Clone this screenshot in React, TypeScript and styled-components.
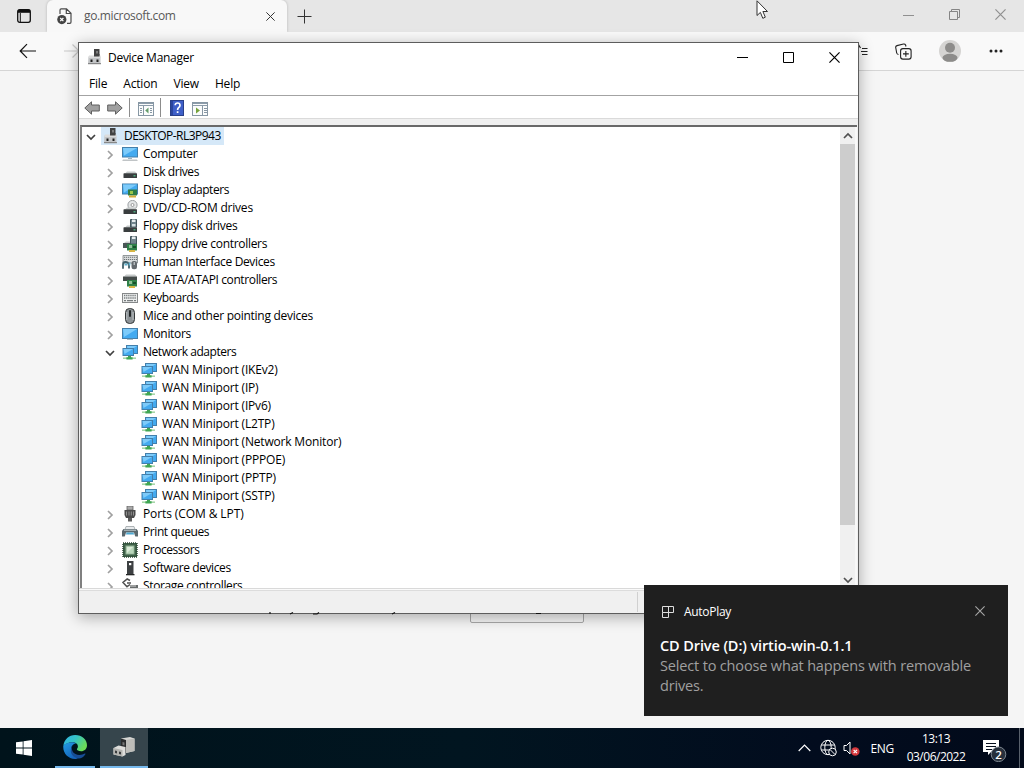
import React from 'react';
import styled, { createGlobalStyle } from 'styled-components';

const GlobalStyle = createGlobalStyle`
  * { box-sizing: border-box; }
  body {
    margin: 0;
    overflow: hidden;
    font-family: 'Open Sans', 'Noto Sans', sans-serif;
    font-size: 12px;
    color: #000;
  }
  svg { display: block; flex: none; }
`;

const Desktop = styled.div`
  position: relative;
  width: 1024px;
  height: 768px;
  display: flex;
  flex-direction: column;
  overflow: hidden;
`;

/* ---------- browser ---------- */

const Browser = styled.div`
  flex: 1;
  display: flex;
  flex-direction: column;
  background: #f5f5f5;
`;

const TabStrip = styled.div`
  height: 32px;
  display: flex;
  align-items: stretch;
  background: #e6e6e6;
`;

const TabActions = styled.div`
  width: 47px;
  display: flex;
  align-items: center;
  padding-left: 17px;
`;

const Tab = styled.div`
  width: 240px;
  display: flex;
  align-items: center;
  padding: 0 12px 0 9px;
  background: #f8f8f8;
  border-radius: 6px 6px 0 0;
  box-shadow: 0 0 3px rgba(0, 0, 0, 0.22);
`;

const TabTitle = styled.span`
  flex: 1;
  margin-left: 11px;
  padding-bottom: 1px;
  color: #585858;
  letter-spacing: -0.36px;
  white-space: nowrap;
`;

const NewTab = styled.div`
  display: flex;
  align-items: center;
  padding-left: 10px;
`;

const BrowserControls = styled.div`
  margin-left: auto;
  display: flex;
  align-items: center;
  gap: 35px;
  padding: 0 18px 4px 0;
`;

const AddressBar = styled.div`
  position: relative;
  z-index: 1;
  height: 39px;
  display: flex;
  align-items: center;
  padding: 0 21px 0 19px;
  background: #f9f9f9;
  border-bottom: 1px solid #d5d5d5;
`;

const NavIcons = styled.div`
  display: flex;
  gap: 26px;
`;

const ToolIcons = styled.div`
  margin-left: auto;
  display: flex;
  align-items: center;
  gap: 27px;
`;

const Page = styled.div`
  flex: 1;
  padding: 519px 0 0 470px;
`;

const PageButton = styled.div`
  width: 114px;
  height: 33px;
  border: 1px solid #a8a8a8;
  border-radius: 2px;
`;

const Pointer = styled.svg`
  position: absolute;
  z-index: 5;
  left: 756px;
  top: 0;
`;

/* ---------- device manager ---------- */

const Window = styled.div`
  position: absolute;
  z-index: 2;
  left: 78px;
  top: 42px;
  width: 781px;
  height: 572px;
  display: flex;
  flex-direction: column;
  background: #f0f0f0;
  border: 1px solid #5d5d5d;
  box-shadow: 0 3px 14px rgba(0, 0, 0, 0.32);
`;

const TitleBar = styled.div`
  height: 30px;
  display: flex;
  align-items: center;
  padding: 0 18px 2px 8px;
  background: #fff;
`;

const WindowTitle = styled.span`
  flex: 1;
  margin-left: 5px;
  letter-spacing: -0.28px;
`;

const WindowControls = styled.div`
  display: flex;
  gap: 35px;
`;

const MenuBar = styled.div`
  height: 23px;
  display: flex;
  align-items: center;
  gap: 16px;
  padding: 0 0 2px 10px;
  background: #fff;
  border-bottom: 1px solid #a3a3a3;
`;

const MenuItem = styled.span`
  letter-spacing: -0.18px;
`;

const Toolbar = styled.div`
  height: 23px;
  display: flex;
  align-items: center;
  padding: 1px 0 0 5px;
  background: #fff;
  border-bottom: 1px solid #dadada;
`;

const Separator = styled.div<{ $after?: number }>`
  width: 1px;
  height: 19px;
  margin: 0 ${p => p.$after ?? 8}px 0 6px;
  background: #8c8c8c;
`;

const ToolButton = styled.div<{ $gap?: number; $drop?: number }>`
  margin-right: ${p => p.$gap ?? 0}px;
  padding-top: ${p => p.$drop ?? 0}px;
`;

const TreePane = styled.div`
  height: 463px;
  margin: 6px 1px 0 1px;
  display: flex;
  background: #fff;
  border-top: 2px solid #696969;
  border-left: 2px solid #808080;
  overflow: hidden;
`;

const TreeList = styled.div`
  flex: 1;
  overflow: hidden;
`;

const Row = styled.div<{ $level: number }>`
  height: 18px;
  display: flex;
  align-items: flex-start;
  padding-left: ${p => p.$level * 19}px;
`;

const ChevronCell = styled.div`
  width: 19px;
  height: 18px;
  display: flex;
  align-items: center;
  justify-content: center;
  padding: 2px 1px 0 0;
`;

const Entry = styled.div<{ $selected?: boolean }>`
  height: 18px;
  display: flex;
  padding: 1px 3px 0 2px;
  background: ${p => (p.$selected ? '#d5e8f8' : 'transparent')};
`;

const EntryText = styled.span<{ $spacing: number }>`
  margin-left: 5px;
  line-height: 15px;
  white-space: nowrap;
  letter-spacing: ${p => p.$spacing}px;
`;

const ScrollBar = styled.div`
  width: 17px;
  display: flex;
  flex-direction: column;
  align-items: center;
  background: #f0f0f0;
  border-right: 2px solid #f8f8f8;
`;

const ScrollArrow = styled.div`
  height: 17px;
  display: flex;
  align-items: center;
`;

const ScrollThumb = styled.div`
  width: 15px;
  height: 381px;
  margin-bottom: auto;
  background: #cdcdcd;
`;

const StatusBar = styled.div`
  flex: 1;
  display: flex;
  border-top: 1px solid #d9d9d9;
  box-shadow: inset 0 1px #fafafa, inset 0 2px #dcdcdc;
`;

const StatusCell = styled.div`
  width: 559px;
  margin: 3px 0 1px;
  border-right: 1px solid #d0d0d0;
`;

const Descenders = styled.svg`
  position: absolute;
  z-index: 3;
  left: 260px;
  top: 611px;
`;

/* ---------- notification ---------- */

const Toast = styled.div`
  position: absolute;
  z-index: 4;
  left: 644px;
  top: 585px;
  width: 364px;
  height: 131px;
  padding: 17px 23px 0 16px;
  background: #1f1f1f;
  color: #fff;
`;

const ToastHeader = styled.div`
  height: 19px;
  display: flex;
  align-items: center;
  padding-left: 1px;
`;

const ToastApp = styled.span`
  flex: 1;
  margin-left: 10px;
  letter-spacing: -0.3px;
`;

const ToastClose = styled.div`
  padding-bottom: 2px;
`;

const ToastTitle = styled.div`
  margin-top: 15px;
  font-size: 14.5px;
  font-weight: 600;
  line-height: 20px;
  letter-spacing: -0.11px;
`;

const ToastBody = styled.div`
  font-size: 14.5px;
  line-height: 20px;
  letter-spacing: -0.16px;
  color: #a0a0a0;
`;

/* ---------- taskbar ---------- */

const Taskbar = styled.div`
  height: 40px;
  display: flex;
  background: linear-gradient(90deg, #00131b, #011520 45%, #020c1e 80%, #020a1a);
  color: #fff;
`;

const TaskButton = styled.div<{ $active?: boolean; $width?: number }>`
  width: ${p => p.$width ?? 48}px;
  display: flex;
  align-items: center;
  justify-content: center;
  background: ${p => (p.$active ? '#36454c' : 'transparent')};
`;

const RunningButton = styled(TaskButton)`
  border-bottom: 2px solid #76b9ed;
`;

const Tray = styled.div`
  margin-left: auto;
  display: flex;
  align-items: center;
`;

const TrayIcons = styled.div`
  display: flex;
  align-items: center;
  gap: 9px;
`;

const Language = styled.span`
  margin-left: 10px;
  letter-spacing: -0.3px;
`;

const Clock = styled.div`
  width: 60px;
  margin: 0 17px 0 12px;
  text-align: center;
  line-height: 18px;
  letter-spacing: -0.5px;
  padding-bottom: 1px;
  white-space: nowrap;
`;

const ShowDesktop = styled.div`
  width: 5px;
  height: 40px;
  margin-left: 12px;
  border-left: 1px solid #59616c;
`;

/* ---------- drawings ---------- */

const Chevron = ({ dir, color = '#a0a0a0' }: { dir: 'right' | 'down' | 'up'; color?: string }) => {
  const paths = {
    right: 'M3 1 L7 5 L3 9',
    down: 'M1 3 L5 7 L9 3',
    up: 'M1 7 L5 3 L9 7',
  };
  return (
    <svg width="10" height="10" fill="none" stroke={color} strokeWidth="1.7">
      <path d={paths[dir]} />
    </svg>
  );
};

const Cross = ({ size = 10, color = '#000', width = 1.1 }: { size?: number; color?: string; width?: number }) => (
  <svg width={size} height={size} viewBox="0 0 10 10" stroke={color} strokeWidth={width}>
    <path d="M.4 .4 L9.6 9.6 M9.6 .4 L.4 9.6" />
  </svg>
);

const Drive = () => (
  <>
    <path d="M3 9.5 L5 7.5 H13 L15 9.5Z" fill="#c5c9c9" />
    <rect x="1.5" y="9.3" width="13.5" height="4.8" rx=".6" fill="#393d3e" />
    <rect x="11.5" y="11.2" width="2" height="1.2" fill="#52c38c" />
  </>
);

const Card = () => (
  <>
    <path d="M5 8h10v6.5H5z" fill="#2f8048" />
    <path d="M7 9h3v3H7z" fill="#8fc197" />
    <path d="M11 10h3v2h-3z" fill="#174f2b" />
    <path d="M7 14h6v2H7z" fill="#d6b646" />
  </>
);

const Screen = ({ x = 0, y = 2, w = 16, h = 11 }) => (
  <>
    <rect x={x + 0.5} y={y + 0.5} width={w - 1} height={h - 1} fill="#43aaf0" stroke="#437fab" />
    <path d={`M${x + 1} ${y + 1}h${w - 2}l-${w - 3} ${h - 3}z`} fill="#7dcbfa" />
  </>
);

const iconShapes: Record<string, React.ReactNode> = {
  root: (
    <>
      <rect x="7" y="0" width="5.5" height="8" fill="#424242" />
      <rect x="9" y="2" width="2" height="2.5" fill="#7d7d7d" />
      <path d="M1.500 7.500h12V15H1z" fill="#c3c5c7" />
      <path d="M2 6.500h11.500V9H1.500z" fill="#dcdcdc" />
      <path d="M7 5h5.500v2.500H7z" fill="#424242" />
      <path d="M1 14.200h13v1H1z" fill="#777" />
      <path d="M3.500 10.500h2V13h-2zM9.500 10.500h2V13h-2z" fill="#202020" />
    </>
  ),
  computer: (
    <>
      <Screen y={1} h={10.5} />
      <path d="M6 12h4v1H6z" fill="#9ab2c0" />
      <path d="M1 13.5h14l.8 1.5H.2z" fill="#c0c4c6" />
    </>
  ),
  disk: <Drive />,
  display: (
    <>
      <Screen y={1.5} h={11} />
      <path d="M6 7.5h9v6H6z" fill="#2e7d46" />
      <path d="M8 9h3v3H8z" fill="#9bc64c" />
      <path d="M7 13.5h7v2H7z" fill="#d5ac3a" />
    </>
  ),
  dvd: (
    <>
      <circle cx="10.5" cy="5" r="4.6" fill="#e3e5e6" stroke="#929698" strokeWidth=".9" />
      <circle cx="10.5" cy="5" r="1.5" fill="#fff" stroke="#888" strokeWidth=".8" />
      <Drive />
    </>
  ),
  floppy: (
    <>
      <Drive />
      <path d="M8.5 1.5h6v7.5h-6z" fill="#71858d" stroke="#42545c" />
      <path d="M10 1.5h3.5V4H10z" fill="#e6ecee" />
      <path d="M10 6h3.5v2.5H10z" fill="#d5e0e3" />
    </>
  ),
  floppyctl: (
    <>
      <path d="M2 7l2-1.5h9V7z" fill="#c9cccc" />
      <path d="M1 7h12v5H1z" fill="#4a5757" />
      <path d="M8.5.5h6V8h-6z" fill="#71858d" stroke="#42545c" />
      <path d="M10 .5h3.5V3H10z" fill="#e6ecee" />
      <Card />
    </>
  ),
  hid: (
    <>
      <path d="M1 1.5h14.5V9H1z" fill="#d9dcdd" stroke="#7e8486" strokeWidth=".8" />
      <path d="M2 3.3h13M2 5.5h13" stroke="#6c7375" strokeWidth="1" strokeDasharray="1.2 .8" />
      <path d="M1 14.8V10.500Q1 8 3.500 8T7 10.500V14.500" fill="none" stroke="#40606a" strokeWidth="1.8" />
      <path d="M2.500 10.500h3" stroke="#5fafcb" strokeWidth="2" />
      <path d="M7.500 8.500v3" stroke="#5fafcb" strokeWidth="1.600" />
      <rect x="9.5" y="7" width="5.5" height="8.3" rx="2.3" fill="#646a6e" />
      <path d="M12.2 8v3" stroke="#dbe0e3" />
    </>
  ),
  ide: (
    <>
      <path d="M2 4.5L4 2.5h9l2 2z" fill="#c5c9c9" />
      <path d="M1 4.5h14V9H1z" fill="#444b4a" />
      <Card />
    </>
  ),
  keyboard: (
    <>
      <rect x=".5" y="3.5" width="15" height="9" fill="#eceeee" stroke="#86898a" />
      <path d="M2 5.5h12M2 8h12" stroke="#777c7e" strokeWidth="1.3" strokeDasharray="1.3 .8" />
      <path d="M2 10.6h2m1 0h6m1 0h2" stroke="#777c7e" strokeWidth="1.2" />
    </>
  ),
  mouse: (
    <>
      <rect x="3.5" y=".5" width="9" height="15" rx="4" fill="#8d9397" stroke="#35393b" />
      <path d="M4.8 4v8M11 4v8" stroke="#b9bec1" />
      <rect x="7" y="2" width="2" height="7" rx="1" fill="#24282a" />
    </>
  ),
  monitor: (
    <>
      <Screen y={2} h={11} />
      <path d="M5 13.4h6" stroke="#9fb4c0" />
    </>
  ),
  network: (
    <>
      <Screen x={4} y={1} w={12} h={9} />
      <Screen x={0.5} y={4} w={11.5} h={8} />
      <path d="M1 14.2h13" stroke="#a6d7a8" strokeWidth="1.6" />
      <path d="M6 12h3v1.2h1.6v2.3H4.400v-2.3H6z" fill="#3fa553" />
    </>
  ),
  ports: (
    <>
      <path d="M5 0h6v4H5z" fill="#aaa" stroke="#636363" strokeWidth=".8" />
      <path d="M2.5 4h11v5l-1.5 3h-8l-1.5-3z" fill="#4a4a4a" />
      <path d="M4.5 5.5v4M7 5.5v4M9.3 5.5v4M11.5 5.5v4" stroke="#909090" />
      <path d="M6 12h4v3.5H6z" fill="#5b5b5b" />
    </>
  ),
  printer: (
    <>
      <path d="M4 2.5h8l1 3H3z" fill="#e7eaec" stroke="#8f9699" strokeWidth=".7" />
      <path d="M1.500 5h13l1.500 2v5.500H0V7z" fill="#5a686e" />
      <path d="M2 5.500h12v1.500H2z" fill="#a2adb1" />
      <path d="M4 8.500h8l1.500 5h-11z" fill="#fff" />
      <path d="M4.500 8.500h7l.6 2H4z" fill="#4ea9d2" />
    </>
  ),
  cpu: (
    <>
      <rect x="1" y="1" width="14" height="14" fill="#3e6048" stroke="#2b4633" strokeDasharray="1 1" strokeWidth="1.5" />
      <rect x="3.8" y="3.8" width="8.4" height="8.4" fill="#b9d6bb" stroke="#729478" strokeWidth=".8" />
      <path d="M5 5h6l-6 6z" fill="#dbebd8" />
    </>
  ),
  software: (
    <>
      <rect x="5" y="1" width="6.5" height="14" fill="#3d4042" />
      <rect x="7" y="3" width="2.3" height="2.2" fill="#fff" />
      <path d="M4 14h8.5v1.3H4z" fill="#252727" />
    </>
  ),
  storage: (
    <>
      <path d="M8 2.5L5.2 1 1 4.5l4 4.2L8 6.5M5 5h4" fill="none" stroke="#4f4f4f" strokeWidth="1.5" />
      <path d="M8 7h8v4H8z" fill="#686c6d" />
      <path d="M9 7v2M11 7v2M13 7v2" stroke="#d5d5d5" />
    </>
  ),
};

const DeviceIcon = ({ name }: { name: string }) => (
  <svg width="16" height="16" viewBox="0 0 16 16">{iconShapes[name]}</svg>
);

const Arrow = ({ flip }: { flip?: boolean }) => (
  <svg width="16" height="16" viewBox="0 0 16 16">
    <path
      transform={flip ? 'translate(16 0) scale(-1 1)' : undefined}
      d="M.8 8L7.5 1.8V5H15.3v6H7.5v3.2z"
      fill="#a0a0a0"
      stroke="#5f5f5f"
    />
  </svg>
);

const PanelIcon = ({ action }: { action?: boolean }) => (
  <svg width="16" height="14" viewBox="0 0 16 14">
    <rect x=".5" y=".5" width="15" height="13" fill="#fbfcfc" stroke="#8797a4" />
    <path d="M1 1.500h14M1 3.500h14" stroke="#8c9caa" />
    <path d={action ? 'M10.5 4v9' : 'M5.5 4v9'} stroke="#8797a4" />
    <path d={action ? 'M12 6.500h3M12 8.500h3M12 10.500h3' : 'M2 6.500h2M2 8.500h2M2 10.500h2M12 6.500h2M12 8.500h2M12 10.500h2'} stroke="#8797a4" />
    {action ? <path d="M4 5.500l4 3-4 3z" fill="#76a33c" /> : <path d="M10.5 5.500v6l-3.3-3z" fill="#639b68" />}
  </svg>
);

const HelpIcon = () => (
  <svg width="14" height="16" viewBox="0 0 14 16">
    <rect x=".5" y=".5" width="13" height="15" fill="#3e5fc8" stroke="#293f88" />
    <path d="M1 1h2v14H1z" fill="#2a459e" />
    <path d="M5.2 5.2Q5.3 3 7.6 3T10 5.2Q10 6.6 8.6 7.6 7.6 8.4 7.6 10M7.6 11.3v1.8" fill="none" stroke="#fff" strokeWidth="1.7" />
  </svg>
);

const EdgeLogo = () => (
  <svg width="24" height="24" viewBox="0 0 24 24">
    <defs>
      <linearGradient id="edgeTop" x1="0" y1="0" x2="1" y2=".5">
        <stop offset="0" stopColor="#2fb2e6" />
        <stop offset=".5" stopColor="#35c3c6" />
        <stop offset="1" stopColor="#6bdc57" />
      </linearGradient>
      <linearGradient id="edgeSide" x1="0" y1="0" x2=".6" y2="1">
        <stop offset="0" stopColor="#239de4" />
        <stop offset="1" stopColor="#1462b8" />
      </linearGradient>
    </defs>
    <path d="M.3 11C1 4.5 6 0 12.2 0 19 0 24 4.8 24 10.2c0 3.7-2.7 6-5.9 6-2.6 0-4.2-.9-4.2-1.9 0-.7 1-1.1 1-2.8C14.9 9 12.7 7.2 9.4 7.2 5.5 7.2 2 9 .3 11z" fill="url(#edgeTop)" />
    <path d="M.3 11C2 8.4 5.5 7.2 9.4 7.2c1.5 0 2.8.4 3.8 1-3 .3-5 3-5 5.8 0 4.5 3.8 8 8.3 8.2C15 23.3 13.4 24 12 24 5 24-.3 18 .3 11z" fill="url(#edgeSide)" />
    <path d="M9.7 10.2C8 13 9 17 12 18.8c3 1.8 7 1.5 9.8-.2.5-.3.9.1.6.6-2 3-4.5 4.3-6.7 4.2C10 23 6.5 18 8.2 13c.3-1 .8-2 1.5-2.8z" fill="#174d94" />
  </svg>
);

const TowerIcon = () => (
  <svg width="24" height="24" viewBox="0 0 24 24">
    <path d="M9 3.5L18 2l4.5 1.5V16L14 18H9z" fill="#d6d6d3" />
    <path d="M9 3.5l5 1.5v13H9z" fill="#2a2c2d" />
    <path d="M14 5l8.5-1.5V16L14 18z" fill="#bdbdb9" />
    <path d="M10.5 7l2 .5v3l-2-.5z" fill="#777" />
    <path d="M1.5 13l5-2.500 7 1.500v8l-3 1.500-9-2z" fill="#dededb" />
    <path d="M1.5 13l9 2v6.500l-9-2z" fill="#b4b4b0" />
    <path d="M3 15.500l2 .5v2.500L3 18zM7 16.500l2 .5v2.500L7 19z" fill="#3a3c3d" />
  </svg>
);

type Device = { label: string; icon: string; level: number; spacing: number; open?: boolean; leaf?: boolean };

const wan = (label: string): Device => ({
  label: `WAN Miniport (${label})`,
  icon: 'network',
  level: 2,
  spacing: -0.18,
  leaf: true,
});

const devices: Device[] = [
  { label: 'DESKTOP-RL3P943', icon: 'root', level: 0, spacing: -0.53, open: true },
  { label: 'Computer', icon: 'computer', level: 1, spacing: -0.26 },
  { label: 'Disk drives', icon: 'disk', level: 1, spacing: -0.42 },
  { label: 'Display adapters', icon: 'display', level: 1, spacing: -0.46 },
  { label: 'DVD/CD-ROM drives', icon: 'dvd', level: 1, spacing: -0.21 },
  { label: 'Floppy disk drives', icon: 'floppy', level: 1, spacing: -0.28 },
  { label: 'Floppy drive controllers', icon: 'floppyctl', level: 1, spacing: -0.31 },
  { label: 'Human Interface Devices', icon: 'hid', level: 1, spacing: -0.36 },
  { label: 'IDE ATA/ATAPI controllers', icon: 'ide', level: 1, spacing: -0.38 },
  { label: 'Keyboards', icon: 'keyboard', level: 1, spacing: -0.42 },
  { label: 'Mice and other pointing devices', icon: 'mouse', level: 1, spacing: -0.26 },
  { label: 'Monitors', icon: 'monitor', level: 1, spacing: -0.33 },
  { label: 'Network adapters', icon: 'network', level: 1, spacing: -0.46, open: true },
  wan('IKEv2'),
  wan('IP'),
  wan('IPv6'),
  wan('L2TP'),
  wan('Network Monitor'),
  wan('PPPOE'),
  wan('PPTP'),
  wan('SSTP'),
  { label: 'Ports (COM & LPT)', icon: 'ports', level: 1, spacing: -0.1 },
  { label: 'Print queues', icon: 'printer', level: 1, spacing: -0.42 },
  { label: 'Processors', icon: 'cpu', level: 1, spacing: -0.47 },
  { label: 'Software devices', icon: 'software', level: 1, spacing: -0.4 },
  { label: 'Storage controllers', icon: 'storage', level: 1, spacing: -0.36 },
];

const DeviceRow = ({ device }: { device: Device }) => (
  <Row $level={device.level}>
    <ChevronCell>
      {!device.leaf && (
        <Chevron dir={device.open ? 'down' : 'right'} color={device.open ? '#404040' : '#a0a0a0'} />
      )}
    </ChevronCell>
    <Entry $selected={device.level === 0}>
      <DeviceIcon name={device.icon} />
      <EntryText $spacing={device.spacing}>{device.label}</EntryText>
    </Entry>
  </Row>
);

const BrowserWindow = () => (
  <Browser>
    <TabStrip>
      <TabActions>
        <svg width="14" height="14" fill="none" stroke="#111" strokeWidth="1.3">
          <rect x=".7" y=".7" width="12.6" height="12.6" rx="2" />
          <path d="M1 2.3h12" strokeWidth="3" />
          <path d="M3.3 4v9" strokeWidth="1" />
        </svg>
      </TabActions>
      <Tab>
        <svg width="17" height="17" viewBox="0 0 17 17" fill="none" stroke="#4b4b4b" strokeWidth="1.2">
          <path d="M4 6V2Q4 .8 5.2.8H10.5L15 5.3V14Q15 15.4 13.8 15.4H11M10.3 1v4.5h4.5" />
          <circle cx="5.8" cy="11.6" r="4.6" fill="#444" stroke="none" />
          <path d="M4.2 10l3.2 3.2M7.4 10l-3.2 3.2" stroke="#fff" />
        </svg>
        <TabTitle>go.microsoft.com</TabTitle>
        <Cross size={9} color="#333" />
      </Tab>
      <NewTab>
        <svg width="15" height="15" stroke="#333"><path d="M7.5 .5v14M.5 7.5h14" /></svg>
      </NewTab>
      <BrowserControls>
        <svg width="11" height="11" stroke="#909090"><path d="M0 6.5h11" /></svg>
        <svg width="11" height="11" fill="none" stroke="#858585">
          <path d="M.5 2.5h8v8h-8zM2.5 2.5v-2h8v8h-2" />
        </svg>
        <Cross size={11} color="#909090" />
      </BrowserControls>
    </TabStrip>
    <AddressBar>
      <NavIcons>
        <svg width="18" height="16" fill="none" stroke="#111" strokeWidth="1.2"><path d="M17 8H1.5M8 1.2L1.2 8l6.8 6.8" /></svg>
        <svg width="18" height="16" fill="none" stroke="#c9c9c9" strokeWidth="1.2"><path d="M1 8h15M9.5 1.5L16 8l-6.5 6.5" /></svg>
      </NavIcons>
      <ToolIcons>
        <svg width="18" height="18" fill="none" stroke="#222" strokeWidth="1.2">
          <path d="M7 14l-4 2 1-5-3-3 4-1 3-5 2.500 4M12 6.500h5.500M11 9.500h6.500M12 12.500h5.500" />
        </svg>
        <svg width="17" height="17" viewBox="0 0 17 17" fill="none" stroke="#222" strokeWidth="1.1">
          <path d="M3.5 11.5Q2 11.3 1.7 10L.7 4.5Q.5 3 2 2.6L8.5 1Q10 .7 10.6 2L11 3.5" />
          <rect x="5.6" y="5.6" width="10.5" height="10.5" rx="2.3" />
          <path d="M10.85 8v5.8M8 10.85h5.8" />
        </svg>
        <svg width="22" height="22" viewBox="0 0 22 22">
          <circle cx="11" cy="11" r="11" fill="#d5d4d2" />
          <circle cx="11" cy="7.8" r="5" fill="#8d8c8a" />
          <ellipse cx="11" cy="17.8" rx="7.5" ry="4" fill="#8d8c8a" />
        </svg>
        <svg width="15" height="4" fill="#222"><circle cx="3" cy="2" r="1.5" /><circle cx="8" cy="2" r="1.5" /><circle cx="13" cy="2" r="1.5" /></svg>
      </ToolIcons>
    </AddressBar>
    <Page>
      <PageButton />
    </Page>
  </Browser>
);

const DeviceManager = () => (
  <Window>
    <TitleBar>
      <DeviceIcon name="root" />
      <WindowTitle>Device Manager</WindowTitle>
      <WindowControls>
        <svg width="11" height="11" stroke="#000"><path d="M0 5.5h11" /></svg>
        <svg width="11" height="11" fill="none" stroke="#000"><path d="M.5 .5h10v10H.5z" /></svg>
        <Cross size={11} />
      </WindowControls>
    </TitleBar>
    <MenuBar>
      <MenuItem>File</MenuItem>
      <MenuItem>Action</MenuItem>
      <MenuItem>View</MenuItem>
      <MenuItem>Help</MenuItem>
    </MenuBar>
    <Toolbar>
      <ToolButton $gap={7}><Arrow /></ToolButton>
      <ToolButton><Arrow flip /></ToolButton>
      <Separator />
      <ToolButton $drop={2}><PanelIcon /></ToolButton>
      <Separator $after={9} />
      <ToolButton $gap={8}><HelpIcon /></ToolButton>
      <ToolButton $drop={2}><PanelIcon action /></ToolButton>
    </Toolbar>
    <TreePane>
      <TreeList>
        {devices.map(device => <DeviceRow key={device.label} device={device} />)}
      </TreeList>
      <ScrollBar>
        <ScrollArrow><Chevron dir="up" color="#505050" /></ScrollArrow>
        <ScrollThumb />
        <ScrollArrow><Chevron dir="down" color="#505050" /></ScrollArrow>
      </ScrollBar>
    </TreePane>
    <StatusBar><StatusCell /></StatusBar>
  </Window>
);

const App: React.FC = () => (
  <Desktop>
    <GlobalStyle />
    <BrowserWindow />
    <DeviceManager />
    <Descenders width="290" height="4" fill="none" stroke="#111" strokeWidth="1.2">
      <path d="M10 1v2M30 3l3-1.5M53 3h4l2-1.5M132 3l3-1.5M276 2.5h5" />
    </Descenders>
    <Pointer width="13" height="20" viewBox="0 0 13 20" fill="#fff" stroke="#333">
      <path d="M1 .8V15.5L4.4 12.400 6.800 18.300 9.300 17.200 6.900 11.500H11.500z" />
    </Pointer>
    <Toast>
      <ToastHeader>
        <svg width="13" height="13" fill="none" stroke="#ddd">
          <path d="M1.5 1.5h11v6h-11zM1.5 7.5v5h6v-11" />
        </svg>
        <ToastApp>AutoPlay</ToastApp>
        <ToastClose><Cross color="#a8a8a8" /></ToastClose>
      </ToastHeader>
      <ToastTitle>CD Drive (D:) virtio-win-0.1.1</ToastTitle>
      <ToastBody>Select to choose what happens with removable drives.</ToastBody>
    </Toast>
    <Taskbar>
      <TaskButton>
        <svg width="16" height="16" fill="#fff">
          <path d="M0 2.3L6.7 1.4V7.5H0zM7.5 1.3L16 0v7.5H7.5zM0 8.4h6.7v6.2L0 13.7zM7.5 8.4H16V16l-8.5-1.2z" />
        </svg>
      </TaskButton>
      <TaskButton $width={7} />
      <RunningButton $width={40}><EdgeLogo /></RunningButton>
      <TaskButton $width={5} />
      <RunningButton $active><TowerIcon /></RunningButton>
      <Tray>
        <TrayIcons>
          <svg width="13" height="8" fill="none" stroke="#fff" strokeWidth="1.2"><path d="M.7 7L6.5 1.2 12.3 7" /></svg>
          <svg width="40" height="18" viewBox="0 0 40 18" fill="none" stroke="#fff">
            <circle cx="8" cy="8.5" r="7.2" />
            <ellipse cx="8" cy="8.5" rx="3.2" ry="7.2" />
            <path d="M1.500 6h13M1.500 11h13" />
            <circle cx="12.500" cy="13" r="3.800" fill="#020c1e" />
            <path d="M10 10.500l5 5" />
            <path d="M24 6.500h2.500L30 3v12l-3.500-3.500H24z" />
            <circle cx="35.300" cy="12.500" r="4.300" fill="#d4373c" stroke="none" />
            <path d="M33.600 10.800l3.400 3.400M37 10.800l-3.400 3.400" strokeWidth="1.200" />
          </svg>
        </TrayIcons>
        <Language>ENG</Language>
        <Clock>13:13<br />03/06/2022</Clock>
        <svg width="24" height="28" viewBox="0 0 24 28">
          <path d="M0 6h16v12H8l-3 3v-3H0z" fill="#fff" />
          <path d="M3 9.500h10M3 12.500h10M3 15.500h6" stroke="#07101e" />
          <circle cx="15.500" cy="20.300" r="7.300" fill="#27303c" stroke="#7e8791" />
          <text x="15.500" y="24.500" fill="#fff" fontSize="11.500" fontWeight="600" textAnchor="middle">2</text>
        </svg>
        <ShowDesktop />
      </Tray>
    </Taskbar>
  </Desktop>
);

export default App;
